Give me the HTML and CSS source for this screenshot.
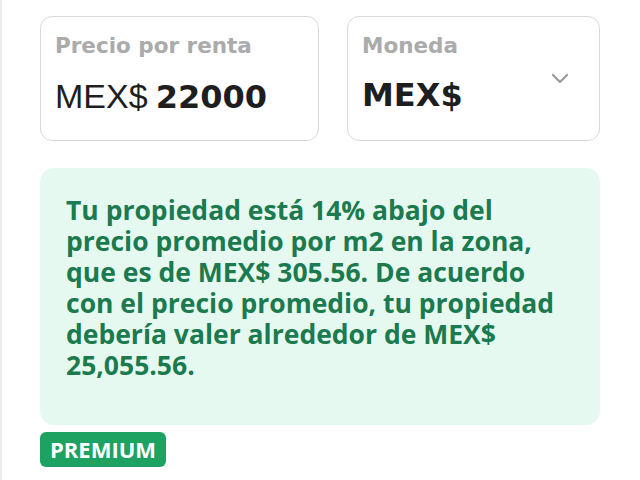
FILE: index.html
```html
<!DOCTYPE html>
<html lang="es">
<head>
    <meta charset="UTF-8">
    <title>Precio por renta</title>
    <link rel="stylesheet" href="styles.css">
</head>
<body>
    <div class="page">
        <div class="fields">
            <div class="field price">
                <div class="field-label">Precio por renta</div>
                <div class="field-value"><span class="currency">MEX$</span> <span class="amount">22000</span></div>
            </div>
            <div class="field currency-select">
                <div class="field-label">Moneda</div>
                <div class="field-value amount">MEX$</div>
                <svg class="chevron" width="18" height="11" viewBox="0 0 18 11">
                    <path d="M2 2 L9 9 L16 2" fill="none" stroke="#9a9a9a" stroke-width="2.2" stroke-linecap="round" stroke-linejoin="round"/>
                </svg>
            </div>
        </div>

        <div class="notice">
            Tu propiedad está 14% abajo del precio promedio por m2 en la zona, que es de MEX$ 305.56. De acuerdo con el precio promedio, tu propiedad debería valer alrededor de MEX$ 25,055.56.
        </div>

        <span class="badge">PREMIUM</span>
    </div>
</body>
</html>
```

FILE: styles.css
```css
body {
    margin: 0;
    background: #ffffff;
    font-family: 'Lato', sans-serif;
}

.page {
    width: 640px;
    height: 480px;
    box-sizing: border-box;
    padding: 16px 40px 0 38px;
    border-left: 2px solid #ececec;
}

.fields {
    display: flex;
    gap: 28px;
}

.field {
    position: relative;
    box-sizing: border-box;
    height: 125px;
    border: 1.5px solid #d9d9d9;
    border-radius: 12px;
    padding: 16px 14px 0 14px;
}

.price {
    width: 279px;
}

.currency-select {
    flex: 1;
}

.field-label {
    font-family: 'DejaVu Sans', sans-serif;
    font-weight: bold;
    font-size: 21.5px;
    color: #ababab;
}

.field-value {
    margin-top: 18px;
    font-size: 32px;
    color: #1e1e1e;
}

.currency {
    font-family: 'Liberation Sans', sans-serif;
    font-size: 34px;
}

.amount {
    font-family: 'DejaVu Sans', sans-serif;
    font-weight: bold;
    font-size: 32px;
}

.chevron {
    position: absolute;
    right: 30px;
    top: 56px;
}

.notice {
    margin-top: 27px;
    box-sizing: border-box;
    height: 257px;
    background: #e6f9f1;
    border-radius: 14px;
    padding: 27px 28px 0 26px;
    color: #1b7a4e;
    font-family: 'Open Sans', sans-serif;
    font-weight: bold;
    font-size: 26.5px;
    line-height: 31px;
}

.badge {
    display: inline-block;
    margin-top: 7px;
    background: #1ea262;
    color: #ffffff;
    border-radius: 6px;
    padding: 5px 10px;
    font-family: 'Open Sans', sans-serif;
    font-weight: bold;
    font-size: 22px;
    line-height: 25px;
}
```
